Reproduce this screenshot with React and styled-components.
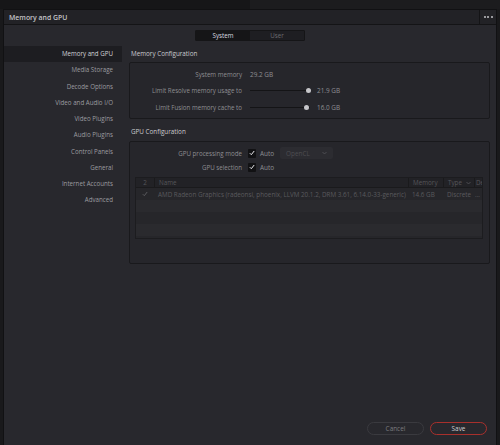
import React from 'react'
import styled, { createGlobalStyle } from 'styled-components'

const GlobalStyle = createGlobalStyle`
  html, body {
    margin: 0;
    padding: 0;
    background: #19191b;
  }
  body {
    font-family: "Open Sans", "Noto Sans", sans-serif;
  }
  * {
    box-sizing: border-box;
  }
`

const Screen = styled.div`
  width: 500px;
  height: 445px;
  display: flex;
  flex-direction: column;
  overflow: hidden;
`
const TopStrip = styled.div`
  height: 9px;
  flex: none;
  display: grid;
  grid-template-columns: 250px 1fr;
  background: #161618;
`
const TopStripRight = styled.div`
  background: #1c1c1e;
`
const Window = styled.div`
  flex: 1;
  margin: 0 3px;
  display: flex;
  flex-direction: column;
  background: #28282d;
  border: 1px solid #111113;
  border-bottom: none;
  min-height: 0;
`
const TitleBar = styled.div`
  height: 15px;
  flex: none;
  display: flex;
  align-items: center;
  background: #222226;
  border-bottom: 1px solid #141416;
`
const Title = styled.div`
  flex: 1;
  padding-left: 5px;
  font-size: 6.9px;
  font-weight: 600;
  color: #c4c4c8;
`
const MoreButton = styled.div`
  width: 17px;
  height: 100%;
  border-left: 1px solid #141416;
  display: flex;
  align-items: center;
  justify-content: center;
  gap: 1.5px;
`
const Dot = styled.span`
  width: 2px;
  height: 2px;
  background: #9a9a9e;
`
const TabRow = styled.div`
  height: 21px;
  flex: none;
  display: flex;
  align-items: center;
  justify-content: center;
`
const Tabs = styled.div`
  width: 110px;
  height: 11px;
  display: grid;
  grid-template-columns: 1fr 1fr;
  background: #1e1e22;
  border: 1px solid #151517;
  border-radius: 1px;
`
const Tab = styled.div`
  display: flex;
  align-items: center;
  justify-content: center;
  font-size: 6.2px;
  color: ${p => (p.$active ? '#dcdce0' : '#6c6c70')};
  background: ${p => (p.$active ? '#151517' : 'transparent')};
`
const Main = styled.div`
  flex: 1;
  display: flex;
  min-height: 0;
`
const Sidebar = styled.div`
  width: 118px;
  flex: none;
  display: flex;
  flex-direction: column;
`
const NavItem = styled.div`
  height: 16.25px;
  line-height: 16.25px;
  padding-right: 9px;
  text-align: right;
  font-size: 6.2px;
  color: ${p => (p.$active ? '#d4d4d8' : '#9c9ca0')};
  background: ${p => (p.$active ? '#1d1d21' : 'transparent')};
`
const Content = styled.div`
  flex: 1;
  padding: 0 6px 0 7px;
  display: flex;
  flex-direction: column;
`
const SectionTitle = styled.div`
  height: 16px;
  line-height: 16px;
  padding-left: 2px;
  margin-top: ${p => p.$gap || 0}px;
  font-size: 6.3px;
  font-weight: 500;
  color: #cacace;
`
const Panel = styled.div`
  height: ${p => p.$height}px;
  border: 1px solid #19191c;
  border-radius: 2px;
  background: #26262b;
  padding-top: ${p => p.$pad || 0}px;
  margin-top: ${p => p.$offset || 0}px;
  display: flex;
  flex-direction: column;
`
const Row = styled.div`
  height: ${p => p.$h || 16.5}px;
  display: flex;
  align-items: center;
`
const Label = styled.div`
  width: 112px;
  flex: none;
  text-align: right;
  font-size: 6.2px;
  color: #8e8e92;
`
const Value = styled.div`
  margin-left: ${p => p.$gap || 8}px;
  font-size: 6.4px;
  color: #8e8e92;
`
const Slider = styled.div`
  position: relative;
  width: 60px;
  height: 5px;
  margin-left: 8px;
  flex: none;
`
const Track = styled.div`
  position: absolute;
  left: 0;
  right: 0;
  top: 2px;
  height: 1px;
  background: #141416;
`
const Thumb = styled.div`
  position: absolute;
  top: 0;
  width: 5px;
  height: 5px;
  margin-left: -2.5px;
  border-radius: 50%;
  background: #c6c6ca;
`
const Check = styled.div`
  width: 8px;
  height: 9px;
  margin-left: 6px;
  border-radius: 1px;
  background: #111113;
  display: flex;
  align-items: center;
  justify-content: center;
`
const Dropdown = styled.div`
  width: 53px;
  height: 12px;
  margin-left: 6px;
  padding: 0 6px 0 6px;
  display: flex;
  align-items: center;
  justify-content: space-between;
  border-radius: 2px;
  background: #2c2c31;
  font-size: 6.4px;
  color: #4e4e52;
`
const Table = styled.div`
  height: 62px;
  margin: 3px 6px 0 5px;
  border: 1px solid #1c1c1f;
  overflow: hidden;
  background: #26262a;
`
const TableRow = styled.div`
  height: ${p => (p.$header ? 10 : 12)}px;
  display: grid;
  grid-template-columns: 18px 254px 35px 31px 1fr;
  background: ${p => (p.$header ? '#222226' : p.$odd ? '#2a2a2e' : '#26262a')};
  border-bottom: ${p => (p.$header ? '1px solid #1a1a1c' : 'none')};
`
const Cell = styled.div`
  display: flex;
  align-items: center;
  justify-content: ${p => (p.$center ? 'center' : 'space-between')};
  padding: 0 ${p => (p.$center || p.$tight ? 0 : 3)}px 0 ${p => (p.$center ? 0 : p.$tight ? 1 : 4)}px;
  border-left: ${p => (p.$sep ? '1px solid #1a1a1c' : 'none')};
  font-size: 6.3px;
  color: ${p => (p.$header ? '#56565a' : '#5a5a5e')};
  white-space: nowrap;
  overflow: hidden;
`
const Footer = styled.div`
  height: 30px;
  flex: none;
  display: flex;
  justify-content: flex-end;
  align-items: flex-start;
  gap: 6px;
  padding: 7px 9px 0 0;
`
const Button = styled.div`
  width: 57px;
  height: 13px;
  border-radius: 7px;
  border: 1px solid ${p => (p.$primary ? '#a8302c' : '#3a3a3f')};
  display: flex;
  align-items: center;
  justify-content: center;
  font-size: 6.4px;
  color: ${p => (p.$primary ? '#cfcfd3' : '#7c7c80')};
`

const CheckMark = ({ color = '#e8e8ec' }) => (
  <svg width="6" height="6" viewBox="0 0 6 6">
    <path d="M0.8 3.2 L2.3 4.7 L5.2 1" fill="none" stroke={color} strokeWidth="1" />
  </svg>
)

const Chevron = ({ color = '#6a6a6e' }) => (
  <svg width="5" height="4" viewBox="0 0 5 4">
    <path d="M0.5 1 L2.5 3 L4.5 1" fill="none" stroke={color} strokeWidth="0.8" />
  </svg>
)

const navItems = [
  'Memory and GPU',
  'Media Storage',
  'Decode Options',
  'Video and Audio I/O',
  'Video Plugins',
  'Audio Plugins',
  'Control Panels',
  'General',
  'Internet Accounts',
  'Advanced',
]

export default function App() {
  return (
    <Screen>
      <GlobalStyle />
      <TopStrip>
        <div />
        <TopStripRight />
      </TopStrip>
      <Window>
        <TitleBar>
          <Title>Memory and GPU</Title>
          <MoreButton>
            <Dot />
            <Dot />
            <Dot />
          </MoreButton>
        </TitleBar>
        <TabRow>
          <Tabs>
            <Tab $active>System</Tab>
            <Tab>User</Tab>
          </Tabs>
        </TabRow>
        <Main>
          <Sidebar>
            {navItems.map((item, i) => (
              <NavItem key={item} $active={i === 0}>
                {item}
              </NavItem>
            ))}
          </Sidebar>
          <Content>
            <SectionTitle>Memory Configuration</SectionTitle>
            <Panel $height={57} $pad={3}>
              <Row>
                <Label>System memory</Label>
                <Value>29.2 GB</Value>
              </Row>
              <Row>
                <Label>Limit Resolve memory usage to</Label>
                <Slider>
                  <Track />
                  <Thumb style={{ left: '98%' }} />
                </Slider>
                <Value $gap={7}>21.9 GB</Value>
              </Row>
              <Row>
                <Label>Limit Fusion memory cache to</Label>
                <Slider>
                  <Track />
                  <Thumb style={{ left: '94%' }} />
                </Slider>
                <Value $gap={7}>16.0 GB</Value>
              </Row>
            </Panel>
            <SectionTitle $gap={5}>GPU Configuration</SectionTitle>
            <Panel $height={123} $pad={4} $offset={1}>
              <Row $h={14}>
                <Label>GPU processing mode</Label>
                <Check>
                  <CheckMark />
                </Check>
                <Value $gap={4}>Auto</Value>
                <Dropdown>
                  OpenCL
                  <Chevron color="#55555a" />
                </Dropdown>
              </Row>
              <Row $h={14}>
                <Label>GPU selection</Label>
                <Check>
                  <CheckMark />
                </Check>
                <Value $gap={4}>Auto</Value>
              </Row>
              <Table>
                <TableRow $header>
                  <Cell $center $header>2</Cell>
                  <Cell $sep $header>Name</Cell>
                  <Cell $sep $header>Memory</Cell>
                  <Cell $sep $header>
                    Type
                    <Chevron color="#56565a" />
                  </Cell>
                  <Cell $sep $header $tight>De</Cell>
                </TableRow>
                <TableRow>
                  <Cell $center>
                    <CheckMark color="#5a5a5e" />
                  </Cell>
                  <Cell>AMD Radeon Graphics (radeonsi, phoenix, LLVM 20.1.2, DRM 3.61, 6.14.0-33-generic)</Cell>
                  <Cell>14.6 GB</Cell>
                  <Cell>Discrete</Cell>
                  <Cell $tight>...</Cell>
                </TableRow>
                <TableRow $odd />
                <TableRow />
                <TableRow $odd />
                <TableRow />
              </Table>
            </Panel>
          </Content>
        </Main>
        <Footer>
          <Button>Cancel</Button>
          <Button $primary>Save</Button>
        </Footer>
      </Window>
    </Screen>
  )
}
